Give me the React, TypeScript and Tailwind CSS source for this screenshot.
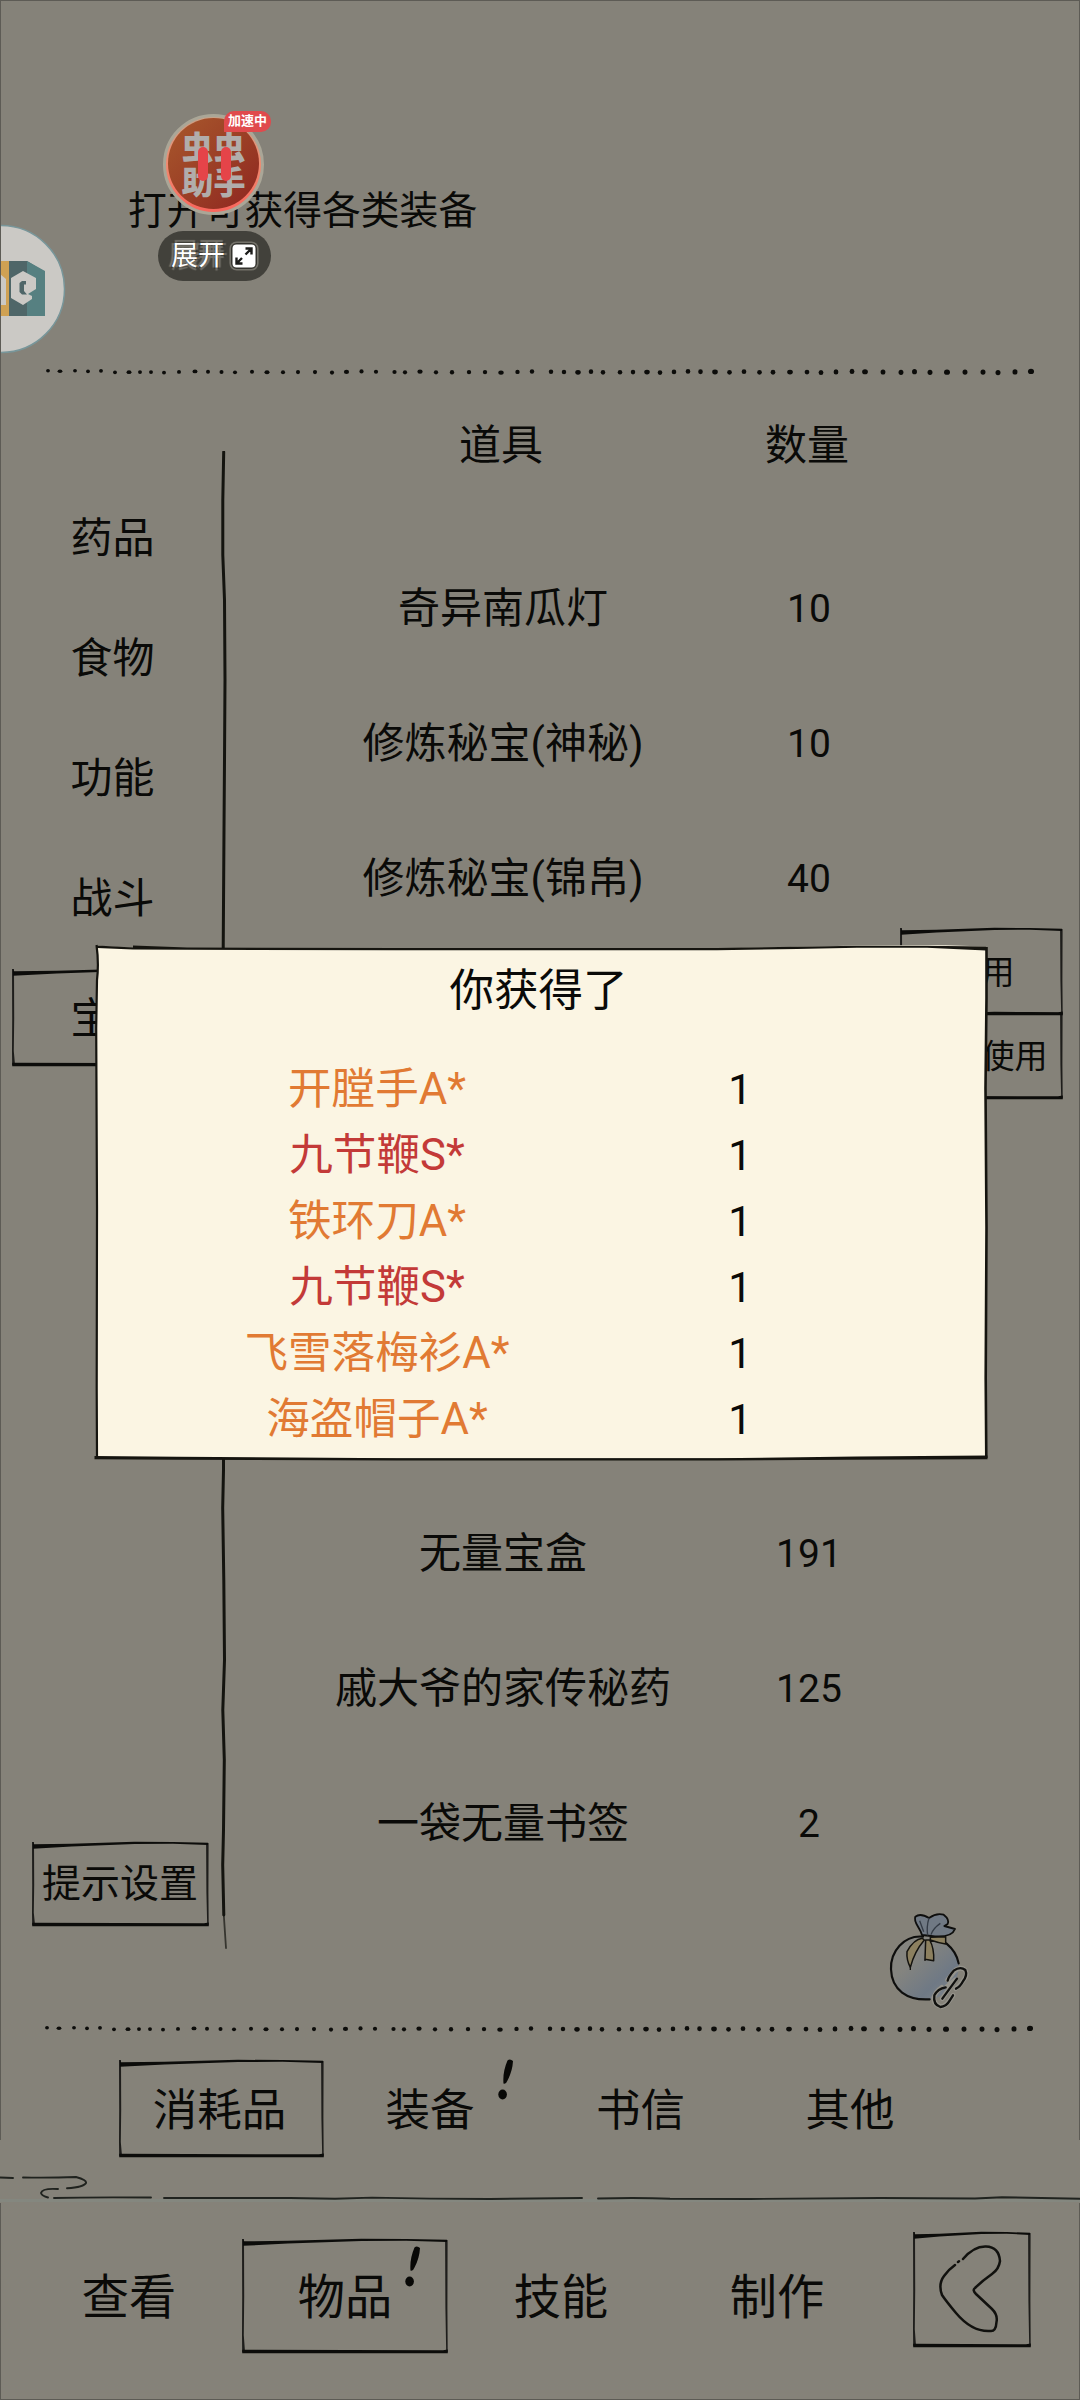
import React from 'react';

type FrameProps = { w: number; h: number; className?: string };

/** Hand-inked rectangle used around selected tabs and buttons. */
function InkFrame({ w, h, className = '' }: FrameProps) {
  return (
    <svg
      className={`pointer-events-none absolute left-0 top-0 overflow-visible ${className}`}
      width={w}
      height={h}
      viewBox={`0 0 ${w} ${h}`}
      fill="#0c0c0a"
    >
      <path d={`M0 -1.200 L1.2 0.3 L${w * 0.22} -0.2 L${w * 0.58} -2.200 L${w * 0.8} -2 L${w} -1.2 L${w} 1 L${w * 0.8} -0.3 L${w * 0.58} 0 L${w * 0.22} 2.6 L0 4.800Z`} />
      <path d={`M-1 -2 L1 -2 L1.2 ${h * 0.5} L0.8 ${h * 0.85} L2 ${h} L-0.8 ${h} L-1 ${h * 0.85} L-0.8 ${h * 0.5}Z`} opacity=".85" />
      <path d={`M${w - 1.9} -0.4 L${w + 0.6} -1 L${w + 0.4} ${h * 0.6} L${w + 0.7} ${h} L${w - 0.8} ${h} L${w - 1.6} ${h * 0.6}Z`} opacity=".85" />
      <path d={`M-0.8 ${h - 2.2} L${w - 4} ${h - 1.7} L${w + 0.8} ${h - 2.6} L${w + 0.8} ${h + 1.3} L-0.8 ${h + 1.3}Z`} />
    </svg>
  );
}

const DOTS: number[] = [
  0, 12, 27, 40, 53, 67, 81, 92, 103, 116, 131, 147, 160, 173.5, 187, 204, 219, 235, 250, 267, 284, 298.5, 313.5, 328,
  346.5, 357, 372, 388, 404, 421, 437, 453, 469.5, 484, 503, 516, 530, 543, 555, 572, 585, 599, 612, 626, 640, 652.5,
  667, 681.5, 696, 711.5, 725, 742, 759, 773, 788, 804, 817, 835, 853, 866.5, 882, 899, 917, 935, 950, 967, 983,
];
const DOT_DY = [0, 0.4, 1.2, 0.6, 1.6, 2, 1, 1.4, 0.8, 1.6, 1.2];

function DottedRule({ width }: { width: number }) {
  return (
    <svg className="ml-[44px] block h-3 shrink-0" width={width} height="12" viewBox="-3 0 989 12" fill="#0c0c0a">
      {DOTS.map((x, i) => (
        <ellipse
          key={x}
          cx={x}
          cy={x < 60 ? 4.8 + (i % 2) * 0.5 : 5.4 + DOT_DY[(i * 3) % 11] * 0.6}
          rx={(i % 5 === 1 ? 2.4 : 1.9) + x / 1600}
          ry={1.8 + x / 1100}
        />
      ))}
    </svg>
  );
}

function Alert({ className }: { className: string }) {
  return (
    <svg className={`absolute ${className}`} width="16" height="41" viewBox="0 0 16 41" fill="#080806">
      <path d="M9.5 1.5 Q12 -.8 15 2 Q14.5 12 9.5 21.500 Q8 25.500 5.500 24.500 Q4.500 13 9.500 1.500Z" />
      <ellipse cx="4.600" cy="35.500" rx="4.300" ry="5" />
    </svg>
  );
}

const SIDE = ['药品', '食物', '功能', '战斗', '宝物'];

const TOP_ROWS: [string, string][] = [
  ['奇异南瓜灯', '10'],
  ['修炼秘宝(神秘)', '10'],
  ['修炼秘宝(锦帛)', '40'],
];
const BOTTOM_ROWS: [string, string][] = [
  ['无量宝盒', '191'],
  ['戚大爷的家传秘药', '125'],
  ['一袋无量书签', '2'],
];

function ItemRow({ name, count }: { name: string; count: string }) {
  return (
    <div className="flex h-[135px] items-center">
      <div className="w-[406px] whitespace-nowrap text-center text-[42px] leading-[60px]">{name}</div>
      <div className="w-[206px] text-center text-[39px] leading-[60px]">{count}</div>
    </div>
  );
}

const REWARDS: [string, 'A' | 'S'][] = [
  ['开膛手A*', 'A'],
  ['九节鞭S*', 'S'],
  ['铁环刀A*', 'A'],
  ['九节鞭S*', 'S'],
  ['飞雪落梅衫A*', 'A'],
  ['海盗帽子A*', 'A'],
];

function RewardDialog() {
  return (
    <section className="absolute left-[97px] top-[948px] h-[510px] w-[889px] bg-[#fbf5e3]">
      <h2 className="relative left-[-3px] pt-[13px] text-center text-[44.5px] leading-[60px]">你获得了</h2>
      <ul className="mt-[36px]">
        {REWARDS.map(([name, grade], i) => (
          <li key={i} className="flex h-[66px] items-center text-[43.6px] leading-[66px]">
            <span
              className={`ml-[79px] w-[402px] text-center ${grade === 'A' ? 'text-[#e17a33]' : 'text-[#c33a38]'}`}
            >
              {name}
            </span>
            <span className="ml-[62px] w-[200px] text-center text-[42px]">1</span>
          </li>
        ))}
      </ul>
      <svg className="absolute left-0 top-0 overflow-visible" width="889" height="510" viewBox="0 0 889 510" fill="none">
        <path d="M0 -1 Q22 1 37 1.500 L90 2 L300 2 L620 2 L720 0 L760 -1 L840 -1.500 L889 0" stroke="#fbf5e3" strokeWidth="3" />
        <path d="M0 -2.500 L36 -.5 L36 -2.500 L90 -.5 L300 0 L620 0 L700 -1.200 L760 -2.300 L830 -2.300 L889 -1.500 L889 2.500 L862 1.200 L830 -.3 L760 -.3 L700 1 L620 2.200 L300 2.200 L90 1.800 L36 1.400 L0 0Z" fill="#15140f" />
        <path d="M-.5 -3 Q2 15 0 32 L-.8 80 L0 260 L-.3 440 L0 510" stroke="#15140f" strokeWidth="2.200" />
        <path d="M889.500 -1 L889.500 50 L888.500 140 L889.500 280 L888.700 430 L889.300 510" stroke="#15140f" strokeWidth="2.600" />
        <path d="M-2.500 508 L80 508.800 L300 510.200 L620 510.200 L760 508.500 L890.500 507.500 L890.500 511.200 L750 511.800 L620 512.600 L300 512.600 L80 511.800 L-2.500 511.200Z" fill="#15140f" />
      </svg>
    </section>
  );
}

function AssistantBall() {
  return (
    <div className="absolute left-[157px] top-[110px] w-[116px]">
      <div className="relative ml-[6px] mt-[4px] flex size-[101px] flex-col items-center justify-center rounded-full border-[3px] border-[#aaa697] bg-linear-to-b from-[#c9a288] via-[#f08a70] to-[#f9655c]">
        <div className="mb-[3px] flex size-[91px] flex-col items-center justify-center rounded-full bg-linear-to-br from-[#a8582c] to-[#8e2420] pt-[5px] text-[32px] font-black leading-[35px] text-[#b1adab]">
          <span>虫虫</span>
          <span>助手</span>
        </div>
        <span className="absolute left-[32px] top-[30px] h-[34px] w-[10px] rounded-full bg-[#e54449]" />
        <span className="absolute left-[55px] top-[30px] h-[34px] w-[10px] rounded-full bg-[#e54449]" />
      </div>
      <span className="absolute left-[67px] top-[1px] h-[21px] w-[47px] rounded-[10px] rounded-bl-none bg-[#e04a4d] text-center text-[13px] font-bold leading-[20px] text-white">
        加速中
      </span>
      <div className="ml-px mt-[16px] flex h-[50px] w-[113px] items-center rounded-full bg-[#42413b] pl-[13px]">
        <span className="text-[27px] leading-[40px] text-white [paint-order:stroke_fill] [text-shadow:0_0_1px_#33322d,3px_0_1px_#74726a,-3px_0_1px_#74726a,0_3px_1px_#74726a,0_-3px_1px_#74726a] [-webkit-text-stroke:3px_#33322d]">
          展开
        </span>
        <svg className="ml-[6px] overflow-visible" width="26" height="26" viewBox="0 0 26 26">
          <rect x="-.8" y="-.8" width="27.600" height="27.600" rx="6.500" fill="#33322d" stroke="#74726a" strokeWidth="1.600" />
          <rect x="1.500" y="1.500" width="23" height="23" rx="4" fill="#fff" />
          <path d="M14.500 5.500 H20.500 V11.500 M20 6 L14.500 11.500 M5.500 14.500 V20.500 H11.500 M6 20 L11 15" fill="none" stroke="#1c1c1a" strokeWidth="2.400" />
        </svg>
      </div>
    </div>
  );
}

function EdgeBubble() {
  return (
    <svg className="absolute left-0 top-[223px]" width="68" height="132" viewBox="0 0 68 132">
      <circle cx="1" cy="66" r="63.500" fill="#cbc9c5" stroke="#78969a" strokeWidth="1.500" />
      <path d="M0 38 H9 V93 H0Z" fill="#cfa153" />
      <path d="M9 38 H27 L45 49 V93 H9Z" fill="#4f6668" />
      <path d="M27 38 L45 48 V93 H27Z" fill="#568081" />
      <path d="M0 51 L6 56 V82 H0Z" fill="#cbc9c5" />
      <path d="M23 48 L36 55 V66 L28 71 L32 73 V76 L23 82 L11 75 V55Z" fill="#cbc9c5" />
      <path d="M26 58 H22 L19.500 60 V69 L22 71.500 H27 L24 68 V61.500 H26Z" fill="#4f6668" />
    </svg>
  );
}

function LinkedBag() {
  return (
    <svg className="absolute left-[887px] top-[1910px]" width="84" height="100" viewBox="80 90 252 300" fill="none">
      <defs>
        <linearGradient id="bag" x1="0" y1="0" x2="1" y2="1">
          <stop offset=".35" stopColor="#84847f" />
          <stop offset=".7" stopColor="#6f7985" />
          <stop offset="1" stopColor="#85898b" />
        </linearGradient>
      </defs>
      <path d="M188 170 C130 165 90 215 92 268 C94 330 140 362 205 358 C262 354 300 300 295 248 C288 205 250 172 205 172Z" fill="url(#bag)" />
      <path d="M188 170 C130 165 90 215 92 268 C94 330 140 362 208 358 M295 250 C290 222 276 205 258 190" stroke="#0e0e0d" strokeWidth="6.500" strokeLinecap="round" />
      <path d="M185 165 C178 140 158 128 165 110 Q180 98 206 114 Q228 98 250 104 Q268 118 262 132 L252 138 L284 147 C276 168 245 172 212 168Z" fill="#707984" stroke="#0e0e0d" strokeWidth="5.500" strokeLinejoin="round" />
      <path d="M206 114 Q198 140 202 166 M240 130 Q218 145 212 164 M178 122 L190 155" stroke="#343b45" strokeWidth="4" />
      <path d="M186 175 Q160 178 140 215 Q138 240 150 262 Q162 215 192 180Z M196 180 L194 238 L220 242 Q222 205 208 180Z M210 172 L256 170 V192 Q232 188 210 180Z" fill="#8c805f" stroke="#14130f" strokeWidth="4.500" strokeLinejoin="round" />
      <path d="M150 262 L150 270 M194 238 L194 243" stroke="#14130f" strokeWidth="4" />
      <g strokeLinecap="round" strokeLinejoin="round">
        <path d="M262 300 L282 274 Q300 258 314 270 Q324 284 310 300 Q298 318 286 326 M260 320 L284 300 L246 356 M244 322 Q226 334 220 354 Q222 378 246 380 Q262 374 278 346" stroke="#96948c" strokeWidth="14" />
        <path d="M262 302 Q264 290 280 272 Q300 258 315 270 Q322 286 308 304 Q300 320 287 326 M290 296 L246 356 M256 322 Q232 326 222 346 Q218 374 240 381 Q258 380 268 362 L278 346" stroke="#11110f" strokeWidth="7" />
      </g>
    </svg>
  );
}

function CloudRule() {
  return (
    <svg className="block h-[32px] w-full shrink-0" viewBox="0 2172 1080 32" fill="none" stroke="#20231f" strokeWidth="1.900" strokeLinecap="round">
      <path d="M0 2200.500 H1080" stroke="#84877f" strokeWidth="3" />
      <path d="M0 2177.500 L13 2178 M23 2177.500 Q50 2178 76 2177 Q87 2180 86 2183 Q84 2187 67 2188.300 M58 2189 Q42 2188 41 2193 Q42 2196 48 2197.500 M54 2198 Q90 2197 151 2197.500 M164 2198 L290 2198 L335 2198.800 L372 2197.600 L430 2198.600 L490 2199 L582 2198" />
      <path d="M598 2198.500 Q640 2197.500 670 2198.800 L750 2199 L880 2198 L975 2198.500 L1002 2197.200 L1080 2198.800" />
    </svg>
  );
}

export default function App() {
  return (
    <div className="relative flex h-[2400px] w-[1080px] flex-col overflow-hidden bg-[#858279] font-['Roboto','Noto_Sans_CJK_SC',sans-serif] text-[#0a0a08]">
      <header className="h-[366px] shrink-0 pl-[128px] pt-[182px] text-[38.8px] leading-[58px]">打开可获得各类装备</header>
      <DottedRule width={991} />

      <main className="flex h-[1645px] shrink-0">
        <aside className="flex w-[220px] flex-col">
          <nav className="mt-[101px] flex flex-col">
            {SIDE.map((label, i) => (
              <div key={label} className="flex h-[120px] items-center pl-[13px]">
                <div className="relative flex h-[94px] w-[199px] items-center justify-center text-[42px] leading-[60px]">
                  {label}
                  {i === 4 && <InkFrame w={199} h={94} className="-mt-px" />}
                </div>
              </div>
            ))}
          </nav>
          <button className="relative ml-[33px] mt-[765px] h-[81px] w-[175px] text-[39px] leading-[81px]">
            <span className="-ml-px block whitespace-nowrap">提示设置</span>
            <InkFrame w={175} h={81} />
          </button>
        </aside>
        <svg className="mt-[73px] block shrink-0" width="8" height="1498" viewBox="220 451 8 1498" fill="none" stroke="#14140f" strokeLinecap="round">
          <path d="M223.700 452 L222.800 500 L222.800 555 L224.500 600 L225 680 L224.500 760 L224 830 L223.200 950 L223.500 1300 L223.500 1470 L222.700 1508 L223.800 1580 L224.500 1660 L222.800 1710 L224.300 1760 L223.500 1830 L222.700 1865 L223.800 1915" strokeWidth="3" />
          <path d="M223.800 1915 L226 1948" strokeWidth="1.800" opacity=".7" />
        </svg>
        <div className="ml-[72px] w-[612px]">
          <div className="-ml-[2px] flex h-[136px] items-center text-[42px] leading-[60px]">
            <div className="w-[406px] text-center">道具</div>
            <div className="w-[206px] text-center">数量</div>
          </div>
          <div className="mt-[27px]">
            {TOP_ROWS.map(([name, count]) => (
              <ItemRow key={name} name={name} count={count} />
            ))}
          </div>
          <div className="mt-[540px]">
            {BOTTOM_ROWS.map(([name, count]) => (
              <ItemRow key={name} name={name} count={count} />
            ))}
          </div>
        </div>
      </main>

      <DottedRule width={989} />

      <nav className="flex h-[137px] shrink-0 pl-[119px] pt-[27px] text-[44.5px] leading-[98px]">
        <div className="relative h-[94px] w-[203px] text-center">
          <span className="-ml-[2px]">消耗品</span>
          <InkFrame w={203} h={94} className="ml-px" />
        </div>
        <div className="relative ml-[6px] w-[204px] text-center">
          装备
          <Alert className="left-[170px] top-[-3px]" />
        </div>
        <div className="ml-[6px] w-[205px] text-center">书信</div>
        <div className="ml-[5px] w-[204px] text-center">其他</div>
      </nav>
      <CloudRule />

      <footer className="flex flex-1 pl-[27px] pt-[30px] text-[47.2px]">
        <div className="mt-[7px] h-[111px] w-[204px] text-center leading-[114px]">查看</div>
        <div className="relative ml-[12px] mt-[7px] h-[111px] w-[204px] text-center leading-[114px]">
          物品
          <InkFrame w={204} h={111} />
          <Alert className="left-[162px] top-[5px]" />
        </div>
        <div className="ml-[12px] mt-[7px] w-[204px] text-center leading-[114px]">技能</div>
        <div className="ml-[12px] mt-[7px] w-[204px] text-center leading-[114px]">制作</div>
        <button className="relative ml-[35px] h-[112px] w-[116px]">
          <InkFrame w={116} h={112} />
          <svg className="absolute left-[24px] top-[10px]" width="66" height="92" viewBox="0 0 66 92" fill="none" stroke="#11110e" strokeWidth="2.500" strokeLinecap="round">
            <path d="M25 15 Q36 2 48 2.500 Q61 3 62 17 Q61 25 54 30 Q44 37 37 44 Q34 46 38 50 L54 65 Q60 71 58.500 78 Q58 88 52 87 Q34 88 18 69 Q8 57 4 51 Q0 40 6 32 Q10 26 17 21 M20 18 L21 17.300" />
          </svg>
        </button>
      </footer>

      <div className="absolute left-[901px] top-[930px] w-[161px] text-center text-[33px]">
        <div className="relative h-[84px] leading-[86px]">
          使用
          <InkFrame w={161} h={84} />
        </div>
        <div className="relative h-[84px] leading-[86px]">
          批量使用
          <InkFrame w={161} h={84} />
        </div>
      </div>

      <LinkedBag />
      <RewardDialog />
      <EdgeBubble />
      <AssistantBall />

      <div className="pointer-events-none absolute inset-x-0 top-0 h-[2140px] border-x border-t border-[#5d5b55]" />
      <div className="pointer-events-none absolute inset-x-0 top-[2203px] h-[197px] border-x border-b border-[#5d5b55]" />
    </div>
  );
}
